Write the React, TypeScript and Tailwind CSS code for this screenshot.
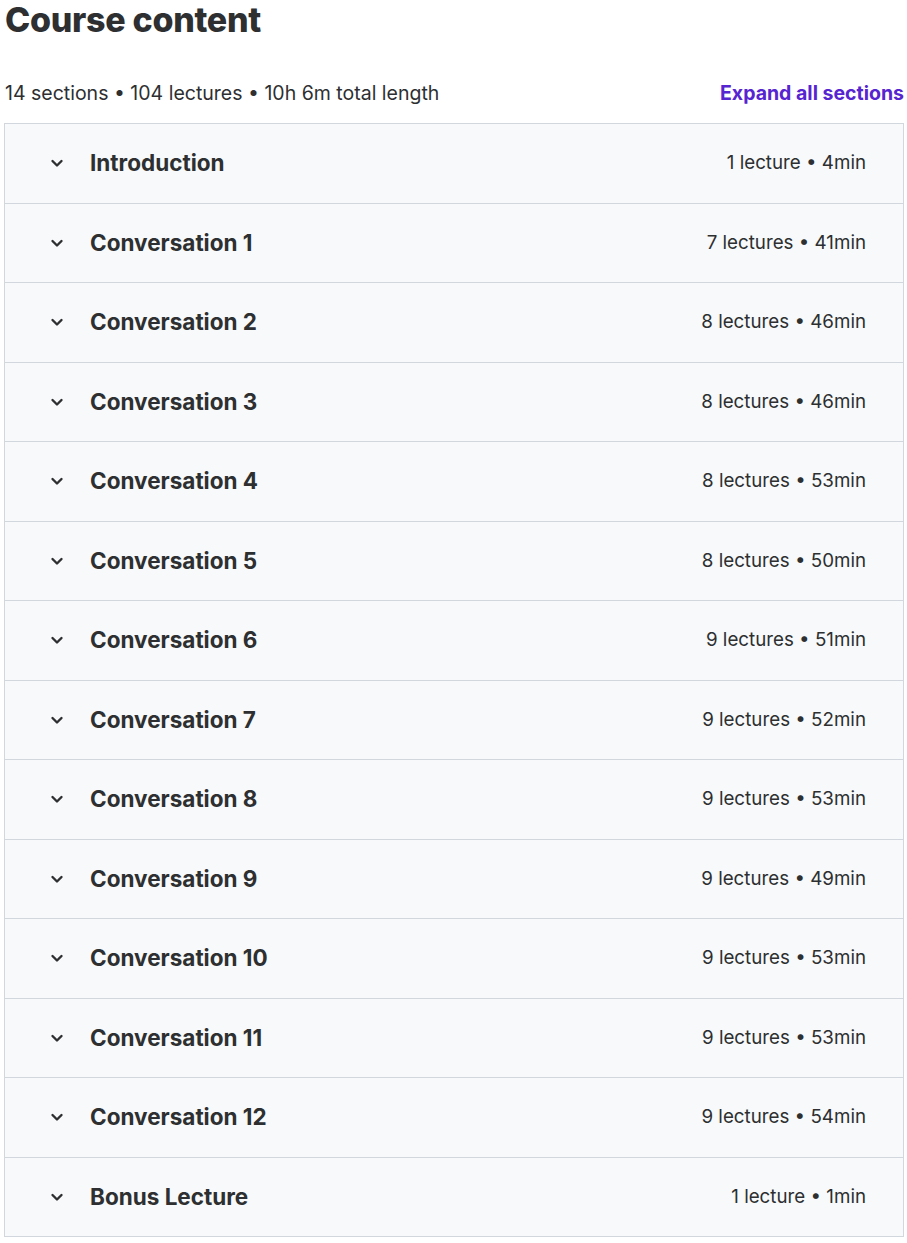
const sections = [
  { title: "Introduction", meta: "1 lecture • 4min" },
  { title: "Conversation 1", meta: "7 lectures • 41min" },
  { title: "Conversation 2", meta: "8 lectures • 46min" },
  { title: "Conversation 3", meta: "8 lectures • 46min" },
  { title: "Conversation 4", meta: "8 lectures • 53min" },
  { title: "Conversation 5", meta: "8 lectures • 50min" },
  { title: "Conversation 6", meta: "9 lectures • 51min" },
  { title: "Conversation 7", meta: "9 lectures • 52min" },
  { title: "Conversation 8", meta: "9 lectures • 53min" },
  { title: "Conversation 9", meta: "9 lectures • 49min" },
  { title: "Conversation 10", meta: "9 lectures • 53min" },
  { title: "Conversation 11", meta: "9 lectures • 53min" },
  { title: "Conversation 12", meta: "9 lectures • 54min" },
  { title: "Bonus Lecture", meta: "1 lecture • 1min" },
];

function Chevron() {
  return (
    <svg width="14" height="14" viewBox="0 0 14 14" fill="none" stroke="currentColor" strokeWidth="2.4" strokeLinecap="round" strokeLinejoin="round">
      <path d="M2.5 5l4.5 4.5 4.5-4.5" />
    </svg>
  );
}

export default function App() {
  return (
    <main className="bg-white min-h-screen text-[#2d2f31] font-['Inter',sans-serif] pl-[4px] pr-[3px]">
      <h2 className="text-[34px] font-extrabold leading-[40px] tracking-[-0.3px] pl-px">Course content</h2>

      <div className="flex items-center justify-between mt-[35px] mb-[12px] pl-px">
        <span className="text-[19.5px] leading-[36px]">14 sections • 104 lectures • 10h 6m total length</span>
        <button className="text-[19.5px] font-bold text-[#5624d0] leading-[36px]">Expand all sections</button>
      </div>

      <div className="border-t border-x border-[#d1d7dc]">
        {sections.map((s) => (
          <div
            key={s.title}
            className="h-[79.5px] flex items-center justify-between bg-[#f7f9fa] border-b border-[#d1d7dc] pl-[45px] pr-[37px]"
          >
            <div className="flex items-center gap-[26px]">
              <Chevron />
              <span className="text-[22.5px] font-bold">{s.title}</span>
            </div>
            <span className="text-[18.75px]">{s.meta}</span>
          </div>
        ))}
      </div>
    </main>
  );
}
